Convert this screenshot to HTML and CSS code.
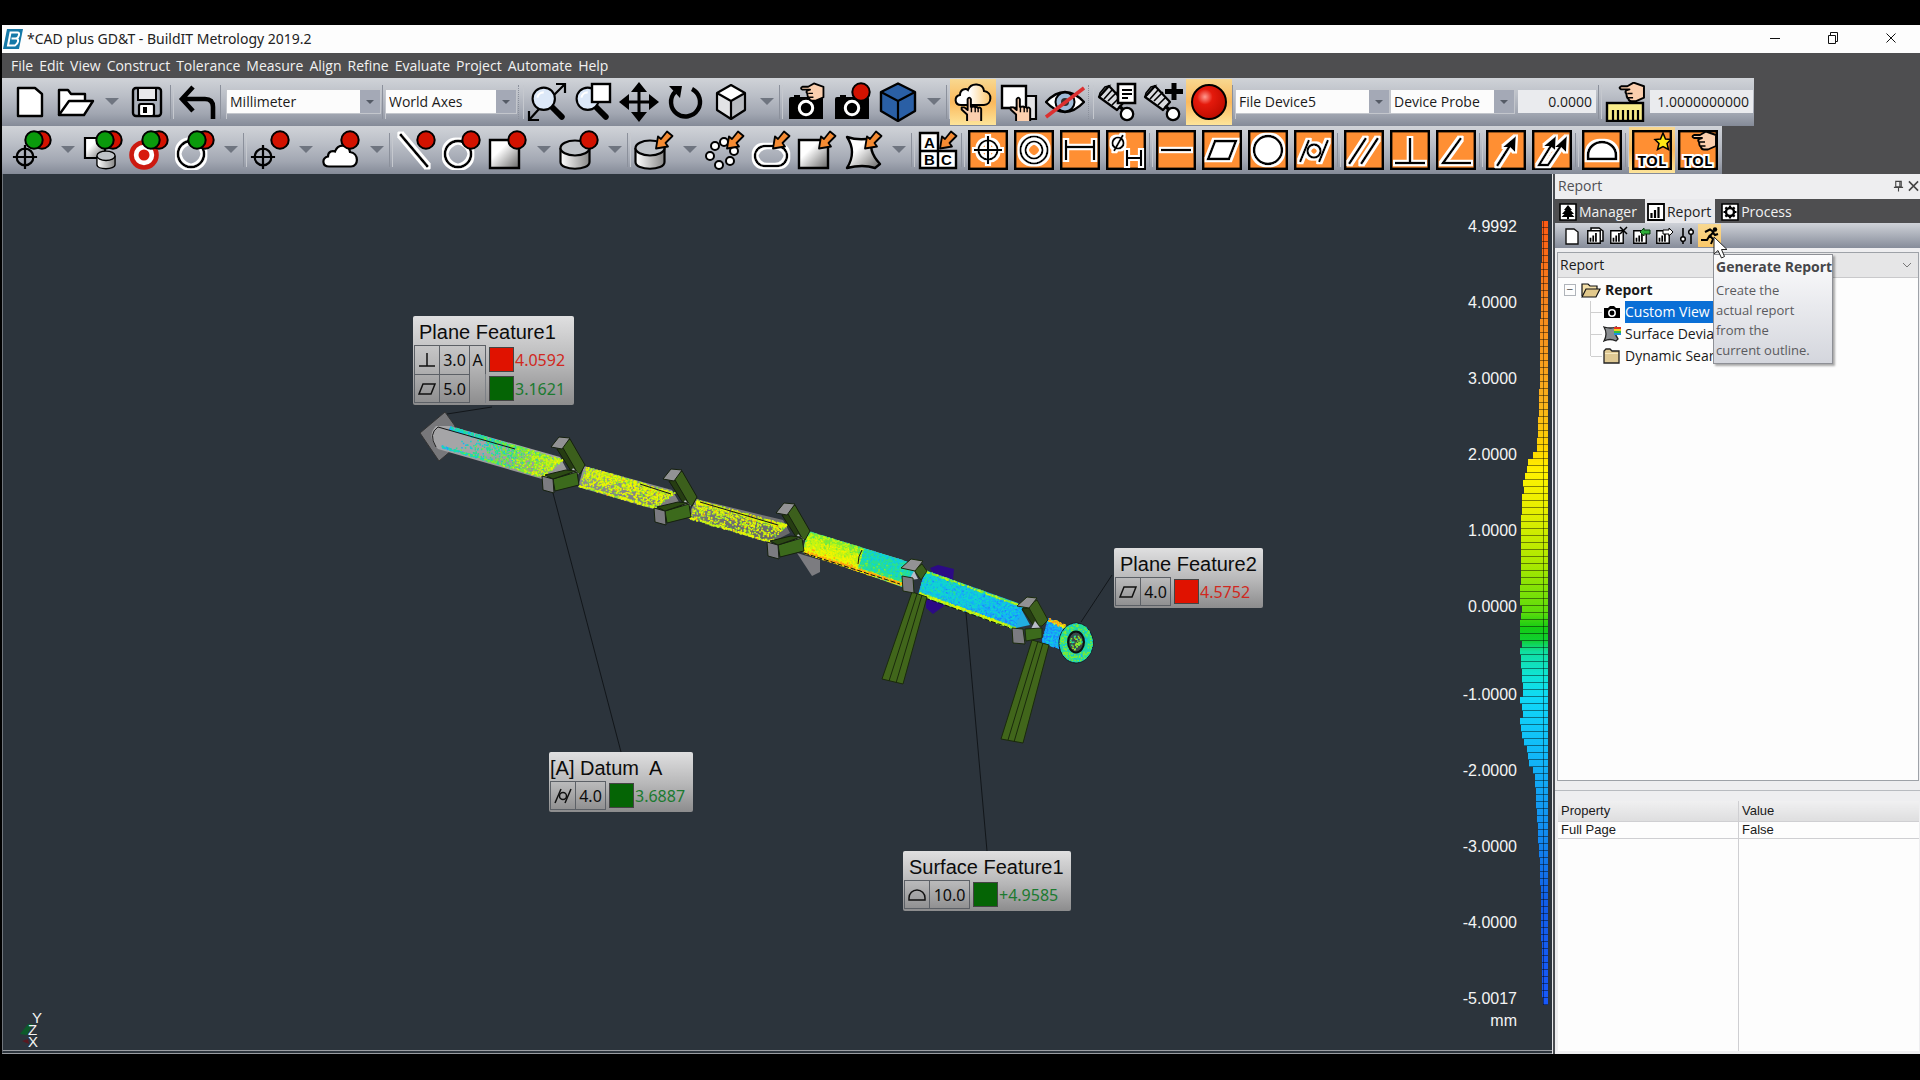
FILE: index.html
```html
<!DOCTYPE html>
<html lang="en">
<head>
<meta charset="utf-8">
<title>*CAD plus GD&amp;T - BuildIT Metrology 2019.2</title>
<link rel="stylesheet" href="styles.css">
</head>
<body>
<svg class="sprite" width="0" height="0" aria-hidden="true">
  <defs>
    <filter id="halo" filterUnits="userSpaceOnUse" x="0" y="0" width="40" height="40">
      <feMorphology in="SourceAlpha" operator="dilate" radius="1.6" result="d"/>
      <feFlood flood-color="#fff"/><feComposite in2="d" operator="in"/>
      <feMerge><feMergeNode/><feMergeNode in="SourceGraphic"/></feMerge>
    </filter>
    <linearGradient id="shade" x1="0" y1="0" x2="1" y2="1"><stop offset="0.35" stop-color="#fff"/><stop offset="1" stop-color="#666"/></linearGradient>
    <linearGradient id="shadeH"><stop offset="0" stop-color="#fff"/><stop offset="1" stop-color="#888"/></linearGradient>
    <radialGradient id="ball" cx="0.38" cy="0.35" r="0.65"><stop offset="0" stop-color="#ff9a90"/><stop offset="0.35" stop-color="#e51a0c"/><stop offset="1" stop-color="#c00c00"/></radialGradient>
    <linearGradient id="cloudG"><stop offset="0.4" stop-color="#fff"/><stop offset="1" stop-color="#fbc56a"/></linearGradient>
  </defs>
  <symbol id="dot" viewBox="0 0 20 20"><circle cx="10" cy="10" r="8.7" fill="#d31200" stroke="#000" stroke-width="2"/></symbol>
  <symbol id="dots" viewBox="0 0 28 20"><circle cx="18" cy="10" r="8.7" fill="#d31200" stroke="#000" stroke-width="2"/><circle cx="10" cy="10" r="8.7" fill="#0a9a0c" stroke="#000" stroke-width="2"/></symbol>
  <symbol id="arr" viewBox="0 0 20 20"><path d="M13 1.5L18.500 6 11.500 13 14 16.500 2 18.500 4 6.500 7 9Z" fill="#f58b33" stroke="#000" stroke-width="1.800" stroke-linejoin="round"/></symbol>
  <symbol id="hand" viewBox="0 0 24 24"><path d="M7 23V17L2 12.500V10.500H4.500L7.500 13V3Q9 0 10.500 3V10H12.500Q13.500 9 14.500 10.500 16 9.500 17 11 19 10 20 12V23" fill="#fbcfae" stroke="#000" stroke-width="1.800" stroke-linejoin="round"/><path d="M11 10v5M14.500 10.500v4.500M17.200 11v4" stroke="#000" stroke-width="1.300"/></symbol>
  <symbol id="handL" viewBox="0 0 26 22"><path d="M25 5L15 1.500 9 5H3Q0 6.500 3 8H11L8 9Q6.500 10.500 8 12L8.500 15Q9 16.500 10 17 10.500 19.500 13 19.500H17L25 16Z" fill="#fbcfae" stroke="#000" stroke-width="1.900" stroke-linejoin="round"/><path d="M9 12h5M9.500 16h5" stroke="#000" stroke-width="1.400"/></symbol>
  <symbol id="cyl" viewBox="0 0 32 32"><path d="M1.500 10V24C1.500 33 30.500 33 30.500 24V10" fill="url(#shadeH)" stroke="#000" stroke-width="2.200"/><ellipse cx="16" cy="10" rx="14.500" ry="7.500" fill="#bfc3c8" stroke="#000" stroke-width="2.200"/></symbol>
  <symbol id="cross" viewBox="0 0 28 28"><circle cx="14" cy="14" r="9" fill="none" stroke="#000" stroke-width="2.400"/><path d="M14 1V27M1 14H27" stroke="#000" stroke-width="2.400"/></symbol>
  <symbol id="camera" viewBox="0 0 36 28"><path d="M1 7Q1 5 3 5H6V3H12V5H34Q35 5 35 7V27H1Z" fill="#000"/><circle cx="18" cy="16" r="6.700" fill="#000" stroke="#fff" stroke-width="3"/></symbol>
  <symbol id="cloud" viewBox="0 0 36 24"><path d="M7 22.500C0 22.500-.5 14 6 12.500 6 7 11 6.500 13 7.500 16-1 27 0 28 8 37 9 37 22.500 29 22.500Z" fill="#fff" stroke="#000" stroke-width="2.200"/></symbol>
  <symbol id="box" viewBox="0 0 40 40"><rect x="1.200" y="1.200" width="37.600" height="37.600" fill="#ff8f33" stroke="#000" stroke-width="2.400"/></symbol>
  <symbol id="mag" viewBox="0 0 32 32"><path d="M20 20L29 29" stroke="#000" stroke-width="5.500" stroke-linecap="round"/><circle cx="12" cy="12" r="10.500" fill="#dce8f8" stroke="#000" stroke-width="2"/><path d="M6 11a6 6 0 0 1 6-5" fill="none" stroke="#fff" stroke-width="2"/></symbol>
  <symbol id="scanner" viewBox="0 0 40 40"><path d="M2 15L12 4 27 20 20 28Z" fill="#d8dade" stroke="#000" stroke-width="2.200" stroke-linejoin="round"/><path d="M2 15l1-4 5-6 4-1zM11 19l9-9M15 23l8-8M7 17L15 8" fill="none" stroke="#000" stroke-width="1.600"/><path d="M22 24L30 31" stroke="#000" stroke-width="3.500"/><circle cx="30" cy="32" r="6.200" fill="#fff" stroke="#000" stroke-width="2.300"/></symbol>
  <symbol id="bars" viewBox="0 0 18 18"><path d="M1 1H17V17H1Z" fill="#fff" stroke="#000" stroke-width="1.800"/><path d="M4.500 15V10M8 15V7M11.500 15V4" stroke="#000" stroke-width="2.200"/></symbol>
</svg>

<main class="app">
  <header class="titlebar">
    <svg class="logo" viewBox="0 0 20 22"><path d="M4 1H20L16 21H0Z" fill="#1579a8"/><path d="M7.500 4.500H14.500Q16.500 4.500 16 7T13.500 10.500Q15.500 11 15 13.500T12 17.500H5ZM8.500 10.500H13" fill="none" stroke="#fff" stroke-width="2"/></svg>
    <h1>*CAD plus GD&amp;T - BuildIT Metrology 2019.2</h1>
    <div class="winbtns">
      <button aria-label="Minimize"><svg viewBox="0 0 12 12"><path d="M1 6.500H11" stroke="#111"/></svg></button>
      <button aria-label="Restore"><svg viewBox="0 0 12 12"><path d="M1.500 3.500H8.500V11.500H1.500ZM3.500 3V.5H10.500V9.500H9" fill="none" stroke="#111"/></svg></button>
      <button aria-label="Close"><svg viewBox="0 0 12 12"><path d="M1.500 1.500L10.500 10.500M10.500 1.500L1.500 10.500" stroke="#111"/></svg></button>
    </div>
  </header>

  <nav class="menubar">
    <button>File</button><button>Edit</button><button>View</button><button>Construct</button><button>Tolerance</button><button>Measure</button><button>Align</button><button>Refine</button><button>Evaluate</button><button>Project</button><button>Automate</button><button>Help</button>
  </nav>

  <section class="bars">
    <div class="toolbar standard" role="toolbar" aria-label="Standard">
      <button aria-label="New"><svg viewBox="0 0 40 40"><path d="M8 6H25L32 12V34H8Z" fill="#fff" stroke="#000" stroke-width="2.400" stroke-linejoin="round"/></svg></button>
      <button aria-label="Open"><svg viewBox="0 0 40 40"><path d="M3 33V8H12L15 12H29V18" fill="#fff" stroke="#000" stroke-width="2.400" stroke-linejoin="round"/><path d="M3 33L13 19H37L28 33Z" fill="#fff" stroke="#000" stroke-width="2.400" stroke-linejoin="round"/></svg></button>
      <button class="drop" aria-label="Open options"></button>
      <button aria-label="Save"><svg viewBox="0 0 40 40"><rect x="6" y="6" width="28" height="28" rx="3" fill="#aab0ba" stroke="#000" stroke-width="2.400"/><path d="M11 6V18H29V6Z" fill="#e8e8ea" stroke="#000" stroke-width="2"/><rect x="12" y="22" width="15" height="12" rx="2" fill="#fff" stroke="#000" stroke-width="2.200"/><rect x="16" y="25" width="4" height="6" fill="#000"/></svg></button>
      <i class="sep"></i>
      <button aria-label="Undo"><svg viewBox="0 0 40 40"><path d="M16 5L5 17 16 29M6 17H28Q36 17 36 25V37" fill="none" stroke="#000" stroke-width="4.600"/></svg></button>
      <i class="sep wide"></i>
      <span class="combo c154"><select aria-label="Units"><option>Millimeter</option></select></span>
      <i class="sep"></i>
      <span class="combo c131"><select aria-label="Axes"><option>World Axes</option></select></span>
      <i class="sep grip"></i>
      <button aria-label="Zoom fit"><svg viewBox="0 0 40 40"><use href="#mag" x="4" y="4" width="34" height="34"/><path d="M27 13L38 2M29 2H38V11M12 27L2 38M2 29V38H12" fill="none" stroke="#000" stroke-width="2.200"/></svg></button>
      <button aria-label="Zoom window"><svg viewBox="0 0 40 40"><use href="#mag" x="2" y="4" width="34" height="34"/><rect x="19" y="2" width="18" height="18" fill="#fff" stroke="#000" stroke-width="2.400"/></svg></button>
      <button aria-label="Pan"><svg viewBox="0 0 40 40"><path d="M20 4V36M4 20H36" stroke="#000" stroke-width="3"/><path d="M20 0L28 10H12ZM20 40L28 30H12ZM0 20L10 12V28ZM40 20L30 12V28Z"/></svg></button>
      <button aria-label="Rotate"><svg viewBox="0 0 40 40"><path d="M27 7A14.500 14.500 0 1 1 10 10" fill="none" stroke="#000" stroke-width="4.400"/><path d="M4 4L17 4 15 16Z"/></svg></button>
      <button aria-label="View cube"><svg viewBox="0 0 40 40"><path d="M20 3L34 11V28L20 37 6 28V11Z" fill="#b8bbc0"/><path d="M20 3L34 11 20 19 6 11Z" fill="#fff"/><path d="M6 11V28L20 37V19Z" fill="#e2e3e5"/><path d="M20 3L34 11V28L20 37 6 28V11ZM6 11L20 19 34 11M20 19V37" fill="none" stroke="#000" stroke-width="2.200" stroke-linejoin="round"/></svg></button>
      <button class="drop" aria-label="View options"></button>
      <i class="sep"></i>
      <button aria-label="Capture view"><svg viewBox="0 0 40 40"><use href="#camera" x="2" y="10" width="36" height="28"/><use href="#handL" x="12" y="0" width="28" height="21"/></svg></button>
      <button aria-label="Record view"><svg viewBox="0 0 40 40"><use href="#camera" x="2" y="10" width="36" height="28"/><use href="#dot" x="19" y="0" width="20" height="20"/></svg></button>
      <button aria-label="Shaded cube"><svg viewBox="0 0 40 40"><path d="M20 1.500L37 10V29L20 39 3 29V10Z" fill="#2a5fa5" stroke="#000" stroke-width="2.400" stroke-linejoin="round"/><path d="M3 10L20 19 37 10M20 19V39" fill="none" stroke="#000" stroke-width="2.200"/></svg></button>
      <button class="drop" aria-label="Shading options"></button>
      <i class="sep"></i>
      <button class="on" aria-label="Pick cloud"><svg viewBox="0 0 40 40"><path d="M8 23C1 23 1 14 7 13 7 7 13 6 15 8 18 0 30 1 31 9 40 10 39 23 31 23Z" fill="url(#cloudG)" stroke="#000" stroke-width="2"/><use href="#hand" x="6" y="14" width="27" height="26"/></svg></button>
      <button aria-label="Pick surface"><svg viewBox="0 0 40 40"><path d="M20 14H37V37H20Z" fill="#e4e4e6" stroke="#000" stroke-width="2.200"/><path d="M3 4H27V26H3Z" fill="#fff" stroke="#000" stroke-width="2.400"/><use href="#hand" x="9" y="14" width="27" height="26"/></svg></button>
      <button aria-label="Hide"><svg viewBox="0 0 40 40"><path d="M1 20Q20 0 39 20 20 40 1 20Z" fill="#fff" stroke="#000" stroke-width="2.400"/><circle cx="20" cy="20" r="9.500" fill="#9fbbd8" stroke="#000" stroke-width="2"/><circle cx="20" cy="20" r="4" fill="#333"/><path d="M1 35L39 6" stroke="#dc3030" stroke-width="3.600"/></svg></button>
      <i class="sep grip"></i>
      <button aria-label="Device log"><svg viewBox="0 0 40 40"><use href="#scanner" width="40" height="40"/><path d="M21 2H38V21H21Z" fill="#fff" stroke="#000" stroke-width="2.600"/><path d="M25 8H35M25 12H35M25 16H31" stroke="#000" stroke-width="2"/></svg></button>
      <button aria-label="Add device"><svg viewBox="0 0 40 40"><use href="#scanner" width="40" height="40"/><path d="M31 1V18M22 9.500H40" stroke="#000" stroke-width="5"/></svg></button>
      <button class="on" aria-label="Record"><svg viewBox="0 0 40 40"><circle cx="20" cy="20" r="17" fill="url(#ball)" stroke="#000" stroke-width="2"/></svg></button>
      <i class="sep"></i>
      <span class="combo c154"><select aria-label="Device"><option>File Device5</option></select></span>
      <span class="combo c124"><select aria-label="Probe"><option>Device Probe</option></select></span>
      <input class="num n78" aria-label="Offset" value="0.0000">
      <i class="sep"></i>
      <button aria-label="Scale"><svg viewBox="0 0 40 40"><rect x="2" y="21" width="36" height="18" fill="#f8ec8a" stroke="#000" stroke-width="2.400"/><path d="M8 28V39M13 28V39M18 28V39M23 28V39M28 28V39M33 28V39" stroke="#000" stroke-width="2.200"/><use href="#handL" x="13" y="-1" width="27" height="23"/></svg></button>
      <input class="num n103" aria-label="Scale factor" value="1.0000000000">
    </div>

    <div class="toolbar" role="toolbar" aria-label="Features">
      <button aria-label="Align point"><svg viewBox="0 0 40 40"><use href="#cross" x="0" y="14" width="26" height="26"/><use href="#dots" x="12" y="0" width="28" height="20"/></svg></button>
      <button class="drop" aria-label="Align options"></button>
      <button aria-label="Align surface"><svg viewBox="0 0 40 40"><path d="M2 8H22V28H2Z" fill="url(#shade)" stroke="#000" stroke-width="2.200"/><use href="#cyl" x="13" y="19" width="20" height="21"/><use href="#dots" x="12" y="0" width="28" height="20"/></svg></button>
      <button aria-label="Align target"><svg viewBox="0 0 40 40"><circle cx="15" cy="25" r="12.500" fill="#fff" stroke="#cc1a10" stroke-width="4.600"/><circle cx="15" cy="25" r="5.500" fill="#d81a0c"/><use href="#dots" x="12" y="0" width="28" height="20"/></svg></button>
      <button aria-label="Align circle"><svg viewBox="0 0 40 40"><circle cx="16" cy="24" r="13" fill="none" stroke="#000" stroke-width="2.800" filter="url(#halo)"/><use href="#dots" x="12" y="0" width="28" height="20"/></svg></button>
      <button class="drop" aria-label="Align circle options"></button>
      <i class="sep"></i>
      <button aria-label="Measure point"><svg viewBox="0 0 40 40"><use href="#cross" x="0" y="14" width="26" height="26"/><use href="#dot" x="20" y="0" width="20" height="20"/></svg></button>
      <button class="drop" aria-label="Point options"></button>
      <button aria-label="Measure cloud"><svg viewBox="0 0 40 40"><use href="#cloud" x="1" y="14" width="36" height="24"/><use href="#dot" x="19" y="0" width="20" height="20"/></svg></button>
      <button class="drop" aria-label="Cloud options"></button>
      <i class="sep"></i>
      <button aria-label="Measure line"><svg viewBox="0 0 40 40"><path d="M4 4L32 37" stroke="#000" stroke-width="2.800" filter="url(#halo)"/><use href="#dot" x="20" y="0" width="20" height="20"/></svg></button>
      <button aria-label="Measure circle"><svg viewBox="0 0 40 40"><circle cx="16" cy="24" r="13" fill="none" stroke="#000" stroke-width="2.800" filter="url(#halo)"/><use href="#dot" x="19" y="0" width="20" height="20"/></svg></button>
      <button aria-label="Measure plane"><svg viewBox="0 0 40 40"><path d="M2 10H31V38H2Z" fill="url(#shade)" stroke="#000" stroke-width="2.400"/><use href="#dot" x="19" y="0" width="20" height="20"/></svg></button>
      <button class="drop" aria-label="Plane options"></button>
      <button aria-label="Measure cylinder"><svg viewBox="0 0 40 40"><use href="#cyl" x="0" y="8" width="32" height="32"/><use href="#dot" x="20" y="0" width="20" height="20"/></svg></button>
      <button class="drop" aria-label="Cylinder options"></button>
      <i class="sep"></i>
      <button aria-label="Extract cylinder"><svg viewBox="0 0 40 40"><use href="#cyl" x="0" y="8" width="32" height="32"/><use href="#arr" x="20" y="0" width="20" height="20"/></svg></button>
      <button class="drop" aria-label="Extract options"></button>
      <button aria-label="Extract points"><svg viewBox="0 0 40 40"><g fill="#fff" stroke="#000" stroke-width="2"><circle cx="10" cy="16" r="4"/><circle cx="19" cy="12" r="4"/><circle cx="29" cy="21" r="4"/><circle cx="25" cy="31" r="4"/><circle cx="14" cy="35" r="4"/><circle cx="5" cy="26" r="4"/></g><use href="#arr" x="20" y="0" width="20" height="20"/></svg></button>
      <button aria-label="Extract slot"><svg viewBox="0 0 40 40"><rect x="4" y="16" width="32" height="20" rx="10" fill="none" stroke="#000" stroke-width="2.600" filter="url(#halo)"/><use href="#arr" x="20" y="0" width="20" height="20"/></svg></button>
      <button aria-label="Extract plane"><svg viewBox="0 0 40 40"><path d="M2 10H31V38H2Z" fill="url(#shade)" stroke="#000" stroke-width="2.400"/><use href="#arr" x="20" y="0" width="20" height="20"/></svg></button>
      <button aria-label="Extract surface"><svg viewBox="0 0 40 40"><path d="M4 7Q16 11 30 8 24 20 37 34L32 38Q20 34 4 38 14 22 4 7Z" fill="url(#shade)" stroke="#000" stroke-width="2.400" stroke-linejoin="round"/><use href="#arr" x="20" y="0" width="20" height="20"/></svg></button>
      <button class="drop" aria-label="Surface options"></button>
      <i class="sep"></i>
      <button aria-label="Datum labels"><svg viewBox="0 0 40 40"><path d="M2 3H20V21H2ZM2 21H20V38H2ZM20 21H38V38H20Z" fill="#fff" stroke="#000" stroke-width="2.400"/><g class="tag"><text x="6" y="18">A</text><text x="6" y="35">B</text><text x="23" y="35">C</text></g><use href="#arr" x="20" y="0" width="20" height="20"/></svg></button>
      <i class="sep"></i>
      <button aria-label="Position"><svg viewBox="0 0 40 40"><use href="#box"/><g fill="none" stroke="#000" stroke-width="2.200" filter="url(#halo)"><circle cx="20" cy="20" r="9.500"/><path d="M20 6V34M6 20H34"/></g></svg></button>
      <button aria-label="Concentricity"><svg viewBox="0 0 40 40"><use href="#box"/><g fill="none" stroke="#000" stroke-width="2.200" filter="url(#halo)"><circle cx="20" cy="20" r="13.500"/><circle cx="20" cy="20" r="8.500"/></g></svg></button>
      <button aria-label="Distance"><svg viewBox="0 0 40 40"><use href="#box"/><path d="M6 10V30M34 10V30M6 17H34" stroke="#000" stroke-width="2.400" filter="url(#halo)"/></svg></button>
      <button aria-label="Diameter"><svg viewBox="0 0 40 40"><use href="#box"/><g fill="none" stroke="#000" stroke-width="2.200" filter="url(#halo)"><circle cx="12" cy="13" r="5.500"/><path d="M8 21L17 5M21 20V36M35 20V36M21 28H35"/></g></svg></button>
      <i class="sep"></i>
      <button aria-label="Straightness"><svg viewBox="0 0 40 40"><use href="#box"/><path d="M5 20H35" stroke="#000" stroke-width="2.400" filter="url(#halo)"/></svg></button>
      <button aria-label="Flatness"><svg viewBox="0 0 40 40"><use href="#box"/><path d="M13 11H34L27 29H6Z" fill="#fff" stroke="#000" stroke-width="2.400" filter="url(#halo)"/></svg></button>
      <button aria-label="Roundness"><svg viewBox="0 0 40 40"><use href="#box"/><circle cx="20" cy="20" r="14" fill="#fff" stroke="#000" stroke-width="2.400" filter="url(#halo)"/></svg></button>
      <button aria-label="Cylindricity"><svg viewBox="0 0 40 40"><use href="#box"/><g fill="none" stroke="#000" stroke-width="2.400" filter="url(#halo)"><circle cx="20" cy="21" r="6.500"/><path d="M6 32L15 10M25 32L34 10"/></g></svg></button>
      <i class="sep"></i>
      <button aria-label="Parallelism"><svg viewBox="0 0 40 40"><use href="#box"/><path d="M5 34L22 8M17 34L34 8" stroke="#000" stroke-width="2.600" filter="url(#halo)"/></svg></button>
      <button aria-label="Perpendicularity"><svg viewBox="0 0 40 40"><use href="#box"/><path d="M20 8V33M5 33H35" stroke="#000" stroke-width="2.600" filter="url(#halo)"/></svg></button>
      <button aria-label="Angularity"><svg viewBox="0 0 40 40"><use href="#box"/><path d="M25 8L7 33H35" fill="none" stroke="#000" stroke-width="2.600" filter="url(#halo)"/></svg></button>
      <i class="sep"></i>
      <button aria-label="Runout"><svg viewBox="0 0 40 40"><use href="#box"/><g filter="url(#halo)"><path d="M11 36L25 14" stroke="#000" stroke-width="2.600"/><path d="M30 6L29 22 24 17 17 17Z"/></g></svg></button>
      <button aria-label="Total runout"><svg viewBox="0 0 40 40"><use href="#box"/><g filter="url(#halo)"><path d="M20 14L7 35H16L30 14" fill="none" stroke="#000" stroke-width="2.400"/><path d="M24 6L23 20 18 16 12 16ZM35 6L34 22 29 17 23 17Z"/></g></svg></button>
      <i class="sep"></i>
      <button aria-label="Profile"><svg viewBox="0 0 40 40"><use href="#box"/><path d="M6 29V25A14 13 0 0 1 34 25V29Z" fill="#fff" stroke="#000" stroke-width="2.600" filter="url(#halo)"/></svg></button>
      <i class="sep"></i>
      <button class="on" aria-label="New tolerance"><svg viewBox="0 0 40 40"><use href="#box"/><path d="M31 3L33.500 9 39 9.500 35 13.500 36.500 19.500 31 16.500 25.500 19.500 27 13.500 23 9.500 28.500 9Z" fill="#ffe814" stroke="#000" stroke-width="1.500"/><text class="tol" x="20" y="36">TOL</text></svg></button>
      <button aria-label="Pick tolerance"><svg viewBox="0 0 40 40"><use href="#box"/><use href="#handL" x="13" y="0" width="26" height="22"/><text class="tol" x="20" y="36">TOL</text></svg></button>
    </div>
  </section>

  <section class="work">
    <div class="view">
      <svg class="scene" aria-hidden="true">
        <defs>
          <linearGradient id="heat" gradientUnits="userSpaceOnUse" x1="0" y1="221" x2="0" y2="1004">
            <stop offset="0" stop-color="#ff5a14"/><stop offset="0.100" stop-color="#f5841e"/><stop offset="0.230" stop-color="#fbb01c"/><stop offset="0.290" stop-color="#ffd400"/><stop offset="0.320" stop-color="#fff200"/><stop offset="0.370" stop-color="#e6ee00"/><stop offset="0.440" stop-color="#a8e800"/><stop offset="0.500" stop-color="#5cdc0c"/><stop offset="0.520" stop-color="#14cc14"/><stop offset="0.535" stop-color="#10d030"/><stop offset="0.550" stop-color="#10deA0"/><stop offset="0.580" stop-color="#10e4d4"/><stop offset="0.610" stop-color="#10d8f8"/><stop offset="0.690" stop-color="#12b4f8"/><stop offset="0.780" stop-color="#128cf0"/><stop offset="0.870" stop-color="#125ee8"/><stop offset="1" stop-color="#1858fa"/>
          </linearGradient>
          <linearGradient id="pipe" x1="0" y1="0" x2="-0.100" y2="1"><stop offset="0.200" stop-color="#a5a5a7"/><stop offset="0.800" stop-color="#68686a"/></linearGradient>
          <g id="bracket" stroke="#15200e" stroke-linejoin="round">
            <path d="M557 449L570 439 585 465 580 474 572 471Z" fill="#3c5f1c"/><path d="M557 449L563 448 577 472 571 471Z" fill="#263d12"/>
            <path d="M551 447L559 437 570 438 562 449Z" fill="#929294"/>
            <path d="M569 476L573 468 579 474Z" fill="#b9bdc8" stroke="none"/>
            <path d="M553 479L577 472 579 485 555 491Z" fill="#3c6a1c"/><path d="M553 479L576 471 566 470 545 475Z" fill="#2c4a14"/>
            <path d="M542 476L553 479 554 493 543 490Z" fill="#7b7b80"/>
          </g>
        </defs>
        <g transform="translate(-3 -174)">
          <path d="M492 407L447 414M553 493L621 752M1112 575L1081 622" class="lead"/>
          <path d="M420 433L445 412 455 426 452 450 439 461Z" fill="#77777a" stroke="#333"/>
          <path d="M797 553L820 560V572L812 576Z" fill="#7c7c80"/>
          <path d="M930 568L938 565 954 569 953 580 935 577ZM926 595L948 603 933 614 926 608Z" fill="#2c0a86"/>
          <path d="M436 426H450L560 457 568 472 542 479 438 449Q426 436 436 426ZM584 466L672 490 679 502 653 509 578 487ZM696 499L783 520 790 533 770 543 687 518Z" fill="url(#pipe)"/>
          <path d="M808 531L903 560 915 572 905 588 802 552Z" fill="#86d860"/>
          <path d="M862 548L903 560 915 572 905 588 858 570Z" fill="#20c4c8"/>
          <path d="M925 570L1018 603 1030 625 1012 629 918 595Z" fill="#22aee0"/>
          <path d="M1048 618L1067 626 1058 648 1042 642Z" fill="#2090f0"/>
          <g id="scan"></g>
          <path d="M438 427L515 449M640 484L671 494M700 502L778 525M862 550Q858 556 858 564" stroke="#151515" fill="none"/>
          <path d="M804 553L900 584M925 598L1010 628" stroke="#111" stroke-dasharray="5 2"/>
          <path d="M438 427Q428 434 436 447" fill="none" stroke="#222"/>
          <g stroke="#1a2a0c" stroke-linejoin="round">
            <path d="M912 592L927 597 903 684 882 679Z" fill="#41661b"/><path d="M917 594L889 681M922 595L896 683" fill="none"/>
            <path d="M1032 640L1049 645 1023 743 1001 739Z" fill="#41661b"/><path d="M1038 641L1008 740M1043 643L1014 742" fill="none"/>
            <path d="M914 570L922 564 927 571 921 580Z" fill="#3c5f1c"/>
            <path d="M909 580L914 571 918 579Z" fill="#b9bdc8" stroke="none"/>
            <path d="M901 568L911 559 923 561 915 571Z" fill="#929294"/><path d="M902 576L913 578 914 593 903 591Z" fill="#7b7b80"/>
            <path d="M1022 609L1037 600 1048 620 1042 626 1035 626Z" fill="#3c5f1c"/><path d="M1022 609L1029 608 1039 626 1033 625Z" fill="#263d12"/>
            <path d="M1017 606L1027 597 1037 598 1029 608Z" fill="#929294"/>
            <path d="M1031 629L1035 621 1041 629Z" fill="#b9bdc8" stroke="none"/>
            <path d="M1025 629L1042 628V638L1026 641Z" fill="#3c6a1c"/><path d="M1012 628L1023 629 1025 644 1013 643Z" fill="#7b7b80"/>
          </g>
          <use href="#bracket"/><use href="#bracket" x="112" y="32"/><use href="#bracket" x="225" y="66"/>
          <ellipse cx="1076" cy="643" rx="17" ry="20" fill="#2cc8a0" stroke="#101820"/>
          <g id="ring"></g>
          <ellipse cx="1076" cy="642" rx="8" ry="10.500" fill="#3a4a4a" stroke="#0a1010" stroke-width="2"/>
          <g id="bore"></g>
          <path d="M966 613L987 851" class="lead"/>
          <g id="histogram" fill="url(#heat)" stroke="#000" stroke-opacity="0.450"></g>
          <path d="M20 1034L28 1024H33L27 1035Z" fill="#0d5a2a"/><path d="M22 1041L28 1039 29 1044Z" fill="#5a1820"/>
        </g>
      </svg>

      <ul class="scale">
        <li>4.9992</li><li>4.0000</li><li>3.0000</li><li>2.0000</li><li>1.0000</li><li class="zero">0.0000</li><li>-1.0000</li><li>-2.0000</li><li>-3.0000</li><li>-4.0000</li><li>-5.0017</li><li class="unit">mm</li>
      </ul>

      <div class="axes"><span>Y</span><span>Z</span><span>X</span></div>

      <article class="callout plane1">
        <h2>Plane Feature1</h2>
        <div class="frame"><span class="sym"><svg viewBox="0 0 18 18"><path d="M9 2V15M1 15H17"/></svg></span><span class="tolv">3.0</span><span class="datum">A</span><i class="swatch bad"></i><b class="bad">4.0592</b></div>
        <div class="frame"><span class="sym"><svg viewBox="0 0 18 18"><path d="M5 4H17L13 14H1Z"/></svg></span><span class="tolv">5.0</span><span class="datum none"></span><i class="swatch good"></i><b class="good">3.1621</b></div>
      </article>
      <article class="callout plane2">
        <h2>Plane Feature2</h2>
        <div class="frame"><span class="sym"><svg viewBox="0 0 18 18"><path d="M5 4H17L13 14H1Z"/></svg></span><span class="tolv">4.0</span><i class="swatch bad"></i><b class="bad">4.5752</b></div>
      </article>
      <article class="callout datumA">
        <h2>[A] Datum&nbsp; A</h2>
        <div class="frame"><span class="sym"><svg viewBox="0 0 18 18"><circle cx="9" cy="9" r="3.500"/><path d="M1 16L7 2M11 16L17 2"/></svg></span><span class="tolv">4.0</span><i class="swatch good"></i><b class="good">3.6887</b></div>
      </article>
      <article class="callout surface1">
        <h2>Surface Feature1</h2>
        <div class="frame"><span class="sym"><svg viewBox="0 0 18 18"><path d="M1 14V12A8 8 0 0 1 17 12V14Z"/></svg></span><span class="tolv long">10.0</span><i class="swatch good"></i><b class="good">+4.9585</b></div>
      </article>
    </div>

    <aside class="panel">
      <header class="phead"><h2>Report</h2>
        <button aria-label="Pin"><svg viewBox="0 0 12 12"><path d="M3 1H9V7H3ZM7.500 1V7M1 7.500H11M6 8V12" fill="none" stroke="#444" stroke-width="1.200"/></svg></button>
        <button aria-label="Close panel"><svg viewBox="0 0 12 12"><path d="M1 1L11 11M11 1L1 11" stroke="#444" stroke-width="1.700"/></svg></button>
      </header>
      <div class="tabs" role="tablist">
        <button role="tab"><svg viewBox="0 0 18 18"><path d="M1 1H17V17H1Z" fill="#fff" stroke="#000" stroke-width="1.600"/><path d="M9 2L13 7H11.500L15 11H12.500L15.500 14H10V16H8V14H2.500L5.500 11H3L6.500 7H5Z"/></svg>Manager</button>
        <button role="tab" class="active"><svg viewBox="0 0 18 18"><use href="#bars"/></svg>Report</button>
        <button role="tab"><svg viewBox="0 0 18 18"><path d="M1 1H17V17H1Z" fill="#fff" stroke="#000" stroke-width="1.600"/><circle cx="9" cy="9" r="4" fill="none" stroke="#000" stroke-width="2.400"/><path d="M9 2.500V5M9 13V15.500M2.500 9H5M13 9H15.500M4.400 4.400L6 6M12 12L13.600 13.600M4.400 13.600L6 12M12 6L13.600 4.400" stroke="#000" stroke-width="2.200"/></svg>Process</button>
      </div>
      <div class="ptools" role="toolbar" aria-label="Report">
        <button aria-label="New page"><svg viewBox="0 0 20 20"><path d="M4 3H12L16 6V18H4Z" fill="#fff" stroke="#111" stroke-width="1.400"/></svg></button>
        <button aria-label="Copy page"><svg viewBox="0 0 20 20"><path d="M6 5V2H14L18 5V15H15" fill="#fff" stroke="#000" stroke-width="1.500"/><use href="#bars" x="2" y="4" width="14" height="14"/></svg></button>
        <button aria-label="Delete page"><svg viewBox="0 0 20 20"><use href="#bars" x="2" y="4" width="14" height="14"/><path d="M12 1L19 8M19 1L12 8" stroke="#000" stroke-width="1.500"/></svg></button>
        <button aria-label="Import"><svg viewBox="0 0 20 20"><use href="#bars" x="2" y="4" width="14" height="14"/><path d="M9 6L13 2V4H19V8H13V10Z" fill="#2fae3a" stroke="#0b3b10"/></svg></button>
        <button aria-label="Export"><svg viewBox="0 0 20 20"><use href="#bars" x="2" y="4" width="14" height="14"/><path d="M19 6L15 2V4H9V8H15V10Z" fill="#fff" stroke="#000"/></svg></button>
        <button aria-label="Settings"><svg viewBox="0 0 20 20"><path d="M6 2V18M14 2V18" stroke="#000" stroke-width="1.600"/><circle cx="6" cy="13" r="2.300" fill="#fff" stroke="#000" stroke-width="1.500"/><circle cx="14" cy="6" r="2.300" fill="#fff" stroke="#000" stroke-width="1.500"/></svg></button>
        <button class="run" aria-label="Generate Report"><svg viewBox="0 0 20 20"><circle cx="15" cy="3.500" r="2.200"/><path d="M5 6L10 3.500 13.500 6 10 10 13 13 11 18M10 9L7 14H1M13 7L15 9 18 8" fill="none" stroke="#000" stroke-width="2"/></svg></button>
      </div>
      <div class="outline">
        <button class="ohead"><span>Report</span><svg viewBox="0 0 10 6"><path d="M1 1L5 5 9 1" fill="none" stroke="#777"/></svg></button>
        <ul class="tree">
          <li><span class="minus">−</span><svg viewBox="0 0 20 16"><path d="M1 14V2H7L9 4H16V7" fill="#f3dfa8" stroke="#111" stroke-width="1.200"/><path d="M1 15L5 7H19L15 15Z" fill="#e2c98c" stroke="#111" stroke-width="1.200"/></svg><strong>Report</strong>
            <ul>
              <li><svg viewBox="0 0 18 16"><path d="M1 4H5L7 2H11L13 4H17V14H1Z"/><circle cx="9" cy="9" r="3.200" fill="none" stroke="#fff" stroke-width="1.500"/></svg><span class="sel">Custom View</span></li>
              <li><svg viewBox="0 0 18 16"><path d="M1 1Q8 3 13 1 11 8 15 13L13 15Q7 12 1 15 5 8 1 1Z" fill="#8a8d90" stroke="#222" stroke-width="1.300"/><path d="M11 1H18V3H11Z" fill="#e03020"/><path d="M11 3H18V5H11Z" fill="#f0d020"/><path d="M11 5H18V7H11Z" fill="#30c040"/><path d="M11 7H18V9H11Z" fill="#2090e0"/></svg><span>Surface Deviation</span></li>
              <li><svg viewBox="0 0 18 16"><path d="M1 15V3L3 1H7L9 3H16V15Z" fill="#dfc994" stroke="#222" stroke-width="1.300"/><path d="M2 5.500H15" stroke="#f6e8c0"/></svg><span>Dynamic Search</span></li>
            </ul>
          </li>
        </ul>
      </div>
      <div class="splitter"></div>
      <div class="props">
        <table>
          <thead><tr><th>Property</th><th>Value</th></tr></thead>
          <tbody><tr><td>Full Page</td><td>False</td></tr><tr class="fill"><td></td><td></td></tr></tbody>
        </table>
      </div>
      <div class="tooltip" role="tooltip"><strong>Generate Report</strong><p>Create the<br>actual report<br>from the<br>current outline.</p></div>
      <svg class="cursor" viewBox="0 0 16 24"><path d="M1 1V18L5 14.500 8.500 22 11.500 20.500 8.500 13.500H14Z" fill="#fff" stroke="#222"/></svg>
    </aside>
  </section>
</main>
<script src="script.js"></script>
</body>
</html>
```
FILE: styles.css
```css
* { box-sizing: border-box; }
body {
  margin: 0;
  background: #000;
  font: 14px/20px "Open Sans", "Noto Sans", sans-serif;
  color: #1a1a1a;
}
button {
  font: inherit;
  color: inherit;
  padding: 0;
  border: 0;
  background: none;
  display: flex;
  align-items: center;
  justify-content: center;
}
h1, h2, ul, p { margin: 0; padding: 0; font-weight: 400; }
ul { list-style: none; }
svg { display: block; }
.sprite { position: absolute; }

.app {
  height: 100vh;
  padding: 25px 0 26px 2px;
  display: flex;
  flex-direction: column;
}

/* Title and menu */
.titlebar {
  flex: 0 0 28px;
  display: flex;
  align-items: center;
  gap: 4px;
  background: #fdfdfd;
}
.logo { width: 20px; height: 22px; margin-left: 1px; }
.titlebar h1 { flex: 1; font: 14px/26px "Noto Sans", sans-serif; color: #222; }
.winbtns { display: flex; padding-bottom: 2px; }
.winbtns button { width: 58px; height: 24px; }
.winbtns svg { width: 12px; height: 12px; }

.menubar {
  flex: 0 0 25px;
  display: flex;
  gap: 6px;
  padding-left: 9px;
  background: #4e4e50;
  color: #f2f2f2;
}

/* Toolbars */
.bars {
  flex: 0 0 96px;
  display: flex;
  flex-direction: column;
  align-items: flex-start;
  background: #4e4e50;
}
.toolbar {
  height: 48px;
  display: flex;
  align-items: center;
  padding: 0 1px 0 7px;
  background: linear-gradient(#d0d3d8, #bcc0c8 35%, #a2a7b2 75%, #878d9a);
  border-bottom: 1px solid #858b98;
}
.toolbar.standard { padding-left: 5px; }
.toolbar button { width: 46px; height: 46px; }
.toolbar button svg { width: 40px; height: 40px; }
.toolbar .on { background: linear-gradient(#f8d890, #fbb95c 50%, #fde49a); }
.toolbar button.drop { width: 25px; }
.drop::after {
  content: "";
  border: 7px solid transparent;
  border-top-color: #6f7580;
  border-bottom: 0;
}
.sep { width: 4px; height: 34px; border-left: 1px solid #8b909b; border-right: 1px solid #c5c8ce; }
.sep.wide { width: 7px; }
.sep.grip { width: 6px; border-left-style: dotted; }
.combo { position: relative; height: 23px; margin-right: 2px; }
.combo select {
  appearance: none;
  width: 100%;
  height: 23px;
  border: 0;
  border-radius: 0;
  padding: 0 22px 0 3px;
  font: inherit;
  color: #1a1a1a;
  background: linear-gradient(to left, #a4a9b6 20px, #fcfcfc 20px);
  outline: 1px solid #c3c6cc;
}
.combo::after {
  content: "";
  position: absolute;
  right: 6px;
  top: 10px;
  border: 4px solid transparent;
  border-top-color: #555b66;
  border-bottom: 0;
}
.c154 { width: 153px; }
.c131 { width: 130px; }
.c124 { width: 123px; }
.num {
  height: 23px;
  border: 0;
  padding: 0 4px;
  margin: 0 2px;
  text-align: right;
  font: inherit;
  color: #1a1a1a;
  background: #eaebee;
}
.n78 { width: 78px; }
.n103 { width: 103px; margin-right: 0; }
.tag { font: bold 15px "Liberation Sans", sans-serif; }
.tol {
  font: bold 15px "Open Sans", sans-serif;
  text-anchor: middle;
  stroke: #fff;
  stroke-width: 4px;
  paint-order: stroke;
}

/* 3D view */
.work { flex: 1; display: flex; min-height: 0; }
.view {
  flex: 1;
  position: relative;
  overflow: hidden;
  background: #2c343c;
  border-left: 1px solid #70757c;
  border-bottom: 4px double #9a9da2;
}
.scene { position: absolute; inset: 0; width: 100%; height: 100%; }
.lead { fill: none; stroke: #12161a; }
.scale {
  position: absolute;
  top: 15px;
  right: 36px;
  text-align: right;
  font: 16px/76px "Liberation Sans", sans-serif;
  color: #f4f4f4;
}
.scale .zero { margin-bottom: 12px; }
.scale .unit { line-height: 22px; margin-top: -27px; }
.axes {
  position: absolute;
  left: 25px;
  top: 838px;
  display: grid;
  font: 15px/12px "Liberation Sans", sans-serif;
  color: #f4f4f4;
}
.axes span:first-child { padding-left: 4px; }

.callout {
  position: absolute;
  border-radius: 2px;
  background: linear-gradient(#dfdfe0, #b6b6b7 55%, #8c8c8d);
  padding: 1px 1px 2px;
  color: #0c0c0c;
}
.callout h2 { font: 20px/30px "Liberation Sans", sans-serif; height: 28px; padding-left: 5px; white-space: nowrap; }
.frame { display: flex; align-items: center; height: 29px; font: 16px/28px "Noto Sans", sans-serif; }
.frame span { height: 29px; border: 1px solid #5c6066; border-width: 1px 1px 0 0; text-align: center; }
.frame:last-child span { border-bottom-width: 1px; }
.frame .sym { width: 26px; border-left-width: 1px; display: grid; place-items: center; }
.sym svg { width: 18px; height: 18px; fill: none; stroke: #111; stroke-width: 1.500; }
.tolv { width: 30px; }
.tolv.long { width: 40px; }
.datum { width: 16px; }
.frame .none { border-top: 0; border-bottom: 0; border-right-color: #7c8086; }
.swatch { width: 25px; height: 25px; margin: 0 1px 0 3px; border: 1px solid #444; }
.frame b { font-weight: 400; }
.swatch.bad { background: #e01200; }
.swatch.good { background: #056405; }
b.bad { color: #d02820; }
b.good { color: #1c7a30; }
.plane1 { left: 410px; top: 142px; width: 161px; }
.plane2 { left: 1111px; top: 374px; width: 149px; }
.datumA { left: 546px; top: 578px; width: 144px; }
.datumA h2 { padding-left: 0; }
.surface1 { left: 900px; top: 677px; width: 168px; }

/* Report panel */
.panel {
  flex: 0 0 367px;
  position: relative;
  display: flex;
  flex-direction: column;
  background: #eeeef0;
  border-left: 2px solid #4a4d52;
  box-shadow: -1px 0 #e8e8ea;
  min-height: 0;
}
.phead { display: flex; align-items: center; height: 25px; padding: 0 1px 2px 3px; gap: 4px; color: #505055; }
.phead h2 { flex: 1; font-size: 14px; line-height: 22px; }
.phead svg { width: 11px; height: 12px; }
.tabs { display: flex; height: 24px; background: #4e4e50; color: #f2f2f2; padding-left: 2px; gap: 4px; }
.tabs button { gap: 2px; padding: 1px 4px 0 2px; }
.tabs svg { width: 18px; height: 18px; }
.tabs .active { background: #e9e9ec; color: #222; }
.ptools { display: flex; align-items: center; height: 25px; padding-left: 5px; background: linear-gradient(#cfd2d8, #868c9a); }
.ptools button { width: 23px; height: 23px; }
.ptools svg { width: 20px; height: 20px; }
.ptools .run { background: linear-gradient(#f8d890, #fbc868); }
.outline { flex: 0 0 529px; display: flex; flex-direction: column; margin: 4px 1px 0 2px; border: 1px solid #9ea2a8; background: #fdfdfd; }
.ohead { height: 25px; justify-content: space-between; padding: 0 6px 0 2px; background: #e6e6e7; border-bottom: 1px solid #c9c9cb; }
.ohead svg { width: 10px; height: 6px; }
.tree { padding: 1px 0 0 6px; white-space: nowrap; }
.tree li { line-height: 22px; }
.tree svg { display: inline-block; width: 20px; height: 16px; vertical-align: -3px; margin-right: 4px; }
.tree ul { margin-left: 26px; border-left: 1px solid #cfcfcf; height: 55px; }
.tree ul li { display: flex; align-items: center; }
.tree ul li::before { content: ""; width: 11px; border-top: 1px solid #cfcfcf; }
.tree ul svg { width: 18px; margin: 0 4px 0 1px; }
.tree .sel { background: #0a6fd6; color: #fff; padding-right: 4px; }
.minus { display: inline-block; width: 12px; height: 12px; border: 1px solid #b0b4ba; font-size: 12px; line-height: 9px; text-align: center; color: #555; margin-right: 5px; vertical-align: 1px; }
.splitter { height: 10px; border-bottom: 1px solid #b8bbc0; }
.props { flex: 1; display: flex; margin: 10px 1px 3px 3px; background: #fdfdfd; min-height: 0; }
table { width: 100%; height: 100%; border-collapse: collapse; font: 13px/16px "Liberation Sans", sans-serif; }
th { width: 50%; height: 20px; text-align: left; font-weight: 400; background: linear-gradient(#f0f0f1, #dededf); }
th, td { padding: 0 3px; border: 1px solid #cfcfd2; border-width: 0 0 1px 1px; }
th:first-child, td:first-child { border-left: 0; }
td { height: 17px; }
.fill td { height: auto; border-bottom: 0; }
.tooltip {
  position: absolute;
  left: 158px;
  top: 80px;
  width: 120px;
  padding: 2px 1px 3px 2px;
  border: 1px solid #8e9096;
  background: linear-gradient(#fcfcfd, #d4d6dd);
  box-shadow: 2px 2px 2px #0005;
  color: #5a5a5e;
  font-size: 13px;
  line-height: 20px;
  white-space: nowrap;
}
.tooltip strong { color: #46464a; font-size: 14px; }
.tooltip p { padding-top: 3px; }
.cursor { position: absolute; left: 158px; top: 62px; width: 16px; height: 24px; }
```
FILE: script.js
```js
const NS = 'http://www.w3.org/2000/svg';
let seed = 7;
const rnd = () => (seed = (seed * 16807) % 2147483647) / 2147483647;
const palette = ['#1e80ff', '#14b4f4', '#10d4d0', '#28e090', '#80ec30', '#c8f410', '#f0f400', '#ffa010'];

function paint(id, points) {
  const paths = palette.map(() => '');
  for (const [x, y, level] of points) {
    const i = Math.max(0, Math.min(palette.length - 1, Math.round(level)));
    paths[i] += `M${x.toFixed(1)} ${y.toFixed(1)}h1.5v1.5h-1.5z`;
  }
  const g = document.getElementById(id);
  paths.forEach((d, i) => {
    const p = document.createElementNS(NS, 'path');
    p.setAttribute('d', d);
    p.setAttribute('fill', palette[i]);
    g.append(p);
  });
}

// Scan points over each pipe section: corners TL, TR, BR, BL, count, colour level and acceptance.
const sections = [
  { q: [450, 426, 563, 459, 542, 477, 441, 447], n: 3000, level: u => 1.4 + u * 3.3, keep: (u, v) => v < 0.14 || v > 0.92 || rnd() < (u * 1.2 - 0.1) * (1.1 - v * 0.8) },
  { q: [586, 466, 675, 492, 654, 508, 578, 486], n: 2000, level: () => 5, keep: (u, v) => v < 0.14 || v > 0.9 || rnd() < 0.85 - v * 0.8 },
  { q: [696, 499, 787, 524, 770, 542, 688, 518], n: 1900, level: () => 5.1, keep: (u, v) => v < 0.2 || v > 0.9 || rnd() < 0.6 - v * 0.5 },
  { q: [808, 531, 912, 563, 904, 586, 802, 552], n: 4200, level: (u, v) => v > 0.88 ? 6.2 : u < 0.53 ? 3.6 + v * 2 : 1.6 + v, keep: () => true },
  { q: [925, 570, 1022, 605, 1014, 629, 918, 594], n: 4200, level: (u, v) => v > 0.9 ? 4.4 : v < 0.06 ? 4 : 1.4 - u, keep: (u, v) => v < 0.7 || v > 0.9 || rnd() < 0.6 },
  { q: [1048, 617, 1067, 625, 1058, 648, 1041, 642], n: 500, level: (u, v) => v < 0.15 ? 6.2 : 0.5, keep: () => true },
];
const dots = [];
for (const s of sections) {
  const [ax, ay, bx, by, cx, cy, dx, dy] = s.q;
  for (let i = 0; i < s.n; i++) {
    const u = rnd(), v = rnd();
    if (!s.keep(u, v)) continue;
    dots.push([
      (ax + (bx - ax) * u) * (1 - v) + (dx + (cx - dx) * u) * v,
      (ay + (by - ay) * u) * (1 - v) + (dy + (cy - dy) * u) * v,
      s.level(u, v) + (rnd() + rnd() - 1) * 1.7,
    ]);
  }
}
paint('scan', dots);

const disc = (n, r0, r1, level, k) => Array.from({ length: n }, () => {
  const a = rnd() * 6.283, r = r0 + (r1 - r0) * Math.sqrt(rnd());
  return [1075.5 + Math.cos(a) * r, 642 + Math.sin(a) * r * k, level + (rnd() - 0.5) * 3];
});
paint('ring', disc(700, 8, 16, 2.5, 1.18));
paint('bore', disc(40, 0, 6, 3.5, 1.2));

// Deviation histogram: [y, width] knots, one bar every 7px.
const knots = [[221, 6], [300, 7], [335, 8], [370, 8], [424, 10], [445, 11], [452, 15], [459, 20], [466, 21], [473, 23], [480, 25], [487, 24], [494, 26], [530, 27], [570, 27], [600, 28], [607, 26], [620, 28], [633, 28], [640, 26], [647, 28], [690, 25], [697, 28], [710, 25], [717, 28], [731, 26], [738, 24], [745, 21], [760, 19], [767, 15], [774, 13], [800, 12], [830, 10], [860, 8], [900, 7], [980, 6], [1004, 5]];
const hist = document.getElementById('histogram');
for (let y = 221; y < 1004; y += 7) {
  const k = Math.max(1, knots.findIndex(p => p[0] > y));
  const [y0, w0] = knots[k - 1], [y1, w1] = knots[k];
  const w = Math.round(w0 + (w1 - w0) * (y - y0) / (y1 - y0));
  const bar = document.createElementNS(NS, 'path');
  bar.setAttribute('d', `M${1548 - w} ${y}H1548V${y + 7}H${1548 - w}Z`);
  bar.setAttribute('stroke', 'none');
  const line = document.createElementNS(NS, 'path');
  line.setAttribute('d', `M${1548 - w} ${y + 6.5}H1548M1543.5 ${y}v7`);
  hist.append(bar, line);
}
```
